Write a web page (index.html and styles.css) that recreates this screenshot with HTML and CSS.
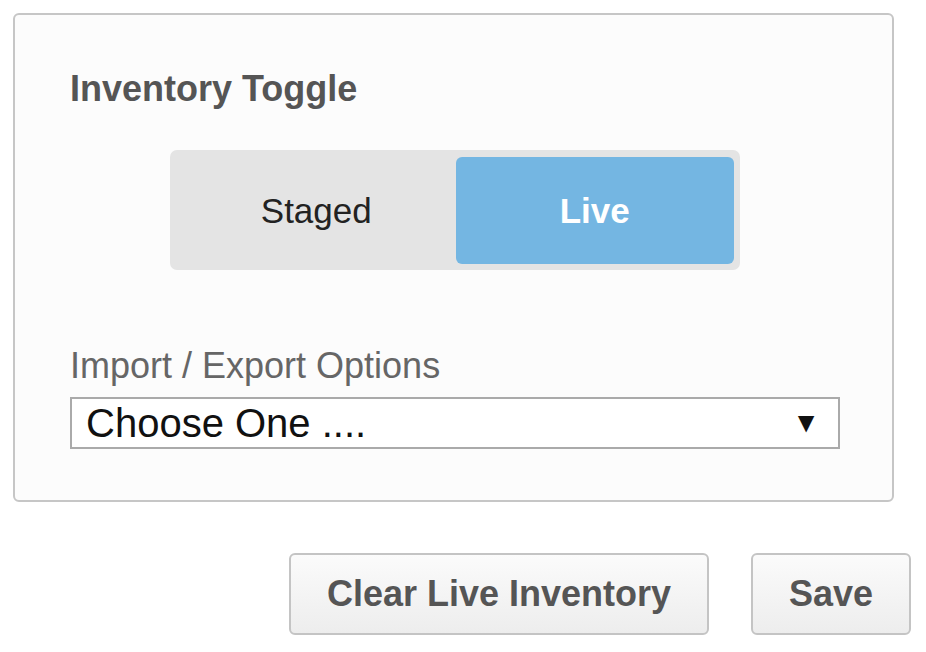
FILE: index.html
```html
<!DOCTYPE html>
<html>
<head>
<meta charset="utf-8">
<link rel="stylesheet" href="styles.css">
</head>
<body>
  <div class="panel">
    <h2 class="title">Inventory Toggle</h2>
    <div class="toggle">
      <div class="opt">Staged</div>
      <div class="opt active">Live</div>
    </div>
    <div class="label">Import / Export Options</div>
    <div class="select">
      <span class="select-text">Choose One ....</span>
      <span class="arrow">&#9660;</span>
    </div>
  </div>
  <div class="actions">
    <button class="btn btn-clear">Clear Live Inventory</button>
    <button class="btn btn-save">Save</button>
  </div>
</body>
</html>
```
FILE: styles.css
```css
html, body {
  margin: 0;
  background: #ffffff;
}
body {
  padding: 13px 15px 0 13px;
  font-family: "Liberation Sans", Arial, sans-serif;
}
.panel {
  box-sizing: border-box;
  width: 881px;
  height: 489px;
  border: 2px solid #c6c6c6;
  border-radius: 6px;
  background: #fcfcfc;
  padding: 54px 52px 0 55px;
}
.title {
  margin: 0;
  font-size: 36px;
  line-height: 40px;
  font-weight: bold;
  color: #555555;
}
.toggle {
  box-sizing: border-box;
  width: 570px;
  height: 120px;
  margin: 41px auto 0;
  padding: 7px 6px 6px 7px;
  background: #e4e4e4;
  border-radius: 7px;
  display: flex;
}
.opt {
  flex: 1;
  display: flex;
  align-items: center;
  justify-content: center;
  font-size: 35px;
  color: #222222;
  border-radius: 6px;
}
.opt.active {
  background: #74b6e2;
  color: #ffffff;
  font-weight: bold;
}
.label {
  margin-top: 76px;
  font-size: 36px;
  line-height: 40px;
  color: #666666;
}
.select {
  box-sizing: border-box;
  margin-top: 11px;
  height: 52px;
  border: 2px solid #aaaaaa;
  background: #ffffff;
  display: flex;
  align-items: center;
  justify-content: space-between;
  padding: 0 18px 0 14px;
}
.select-text {
  font-size: 40px;
  color: #111111;
  line-height: 48px;
}
.arrow {
  font-size: 28px;
  line-height: 30px;
  color: #111111;
}
.actions {
  margin-top: 51px;
  display: flex;
  justify-content: flex-end;
  gap: 42px;
}
.btn {
  box-sizing: border-box;
  height: 82px;
  border: 2px solid #c4c4c4;
  border-radius: 6px;
  background: linear-gradient(#fbfbfb, #ededed);
  font-family: "Liberation Sans", Arial, sans-serif;
  font-size: 36px;
  font-weight: bold;
  color: #555555;
  padding: 0;
}
.btn-clear { width: 420px; }
.btn-save { width: 160px; }
```
